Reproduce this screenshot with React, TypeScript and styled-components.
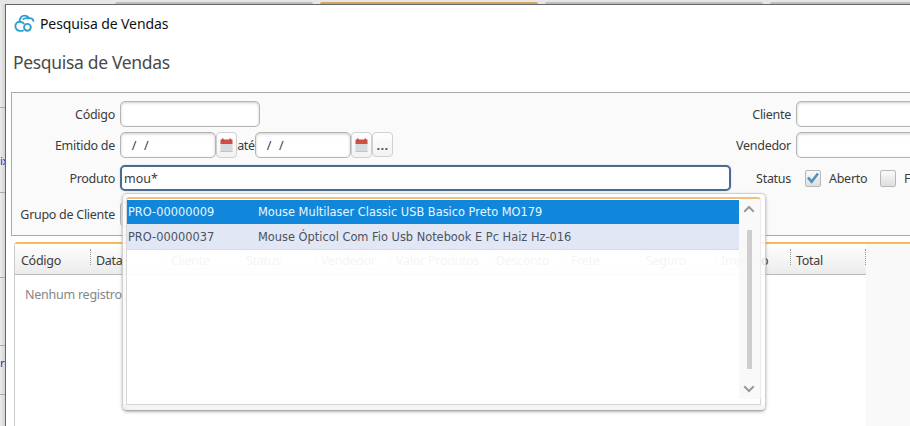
import React from "react";
import styled, { createGlobalStyle } from "styled-components";

const Global = createGlobalStyle`
  * { box-sizing: border-box; }
  html, body { margin: 0; height: 100%; overflow: hidden; }
  body { font-family: "Noto Sans", "Open Sans", sans-serif; font-size: 12.5px; letter-spacing: -0.28px; color: #3c3c3c; background: #e9e9e9; }
`;

const Desktop = styled.div`
  position: relative;
  width: 910px;
  height: 426px;
  overflow: hidden;
  display: grid;
  grid-template-columns: 5px 1fr;
  grid-template-rows: 4px 1fr;
  background: #e6e6e6;
`;

const TabStrip = styled.div`
  grid-column: 1 / 3;
  display: flex;
  align-items: flex-end;
  gap: 7px;
  padding-left: 115px;
`;

const Tab = styled.div<{ $width: number; $active?: boolean }>`
  flex: none;
  width: ${(p) => p.$width}px;
  height: 2px;
  border-radius: 2px 2px 0 0;
  background: ${(p) => (p.$active ? "#cfa666" : "#bdbdbd")};
`;

const Gutter = styled.div`
  overflow: hidden;
  background: linear-gradient(90deg, #ececec, #d4d4d4);
`;

const GutterRow = styled.div<{ $height: number }>`
  display: flex;
  align-items: flex-end;
  height: ${(p) => p.$height}px;
  padding-bottom: 22px;
  border-bottom: 1px dashed #aaa;
  color: #2f2fc4;
  font-size: 11.5px;
  letter-spacing: -0.5px;
  line-height: 18px;
`;

const Window = styled.main`
  min-width: 0;
  border-left: 1px solid #666;
  border-top: 1px solid #666;
  background: #fff;
  overflow: hidden;
`;

const TitleBar = styled.header`
  display: flex;
  align-items: center;
  height: 37px;
  padding-left: 8px;
  gap: 5px;
  color: #111;
  font-size: 14px;
  letter-spacing: -0.1px;
`;

const Heading = styled.h1`
  margin: 0;
  height: 50px;
  padding-left: 7px;
  font-size: 17.5px;
  font-weight: 400;
  line-height: 41px;
  letter-spacing: -0.33px;
  color: #4a4a4a;
`;

const Filters = styled.section`
  display: grid;
  grid-template-columns: 676px 1fr;
  width: 960px;
  height: 144px;
  margin-left: 5px;
  padding-top: 8px;
  border: 1px solid #aaa;
  background: #fafafa;
`;

const Column = styled.div`
  display: flex;
  flex-direction: column;
`;

const FieldRow = styled.div<{ $gap?: number }>`
  display: flex;
  align-items: center;
  height: 26px;
  margin-bottom: ${(p) => p.$gap ?? 5}px;
  white-space: nowrap;
`;

const Label = styled.label`
  flex: none;
  width: 103px;
  margin-right: 5px;
  text-align: right;
`;

const Input = styled.div<{ $width: number; $focus?: boolean }>`
  display: flex;
  align-items: center;
  flex: none;
  width: ${(p) => p.$width}px;
  height: 26px;
  padding-left: ${(p) => (p.$focus ? 2 : 7)}px;
  white-space: pre;
  letter-spacing: ${(p) => (p.$focus ? 0 : 0.4)}px;
  border: ${(p) => (p.$focus ? "2px solid #4c6a90" : "1px solid #b5b5b5")};
  border-radius: 5px;
  background: #fff;
  box-shadow: ${(p) => (p.$focus ? "0 0 2px #bcd0e4" : "inset 0 1px 3px #ccc")};
`;

const SmallButton = styled.span`
  display: flex;
  align-items: center;
  justify-content: center;
  flex: none;
  width: 21px;
  height: 26px;
  border: 1px solid #d0d0d0;
  border-radius: 4px;
  background: linear-gradient(#fff, #f2f2f2);
`;

const Dots = styled(SmallButton)`
  height: 25px;
  margin-bottom: 1px;
  font-weight: 700;
  font-size: 13px;
  letter-spacing: 0.3px;
  color: #555;
`;

const Until = styled.span`
  width: 18px;
  text-align: center;
`;

const Check = styled.span<{ $margin: number }>`
  display: flex;
  align-items: center;
  justify-content: center;
  flex: none;
  width: 16px;
  height: 17px;
  margin-left: ${(p) => p.$margin}px;
  margin-right: 8px;
  border: 1px solid #b8b8b8;
  border-radius: 2px;
  background: linear-gradient(#fafafa, #dedede);
`;

const CheckLabel = styled.span`
  flex: none;
  width: 38px;
`;

const Results = styled.section`
  display: grid;
  grid-template-columns: 851px 1fr;
  grid-template-rows: 30px 1fr;
  height: 190px;
  margin: 6px 0 0 8px;
  border-left: 1px solid #ccc;
  border-top: 2px solid #f7b95b;
  border-radius: 4px 0 0 0;
  background: #fff;
`;

const HeadRow = styled.div`
  display: flex;
  height: 31px;
  padding: 5px 0 0 1px;
  border-bottom: 1px solid #bbb;
  background: linear-gradient(#fff, #ebebeb);
`;

const HeadCell = styled.div<{ $width: number }>`
  flex: none;
  width: ${(p) => p.$width}px;
  height: 16px;
  padding-left: 5px;
  border-right: 1px dotted #999;
  line-height: 23px;
  white-space: nowrap;
`;

const Side = styled.div`
  grid-column: 2;
  grid-row: 1 / 3;
  background: #f9f9f9;
`;

const Empty = styled.div`
  padding: 12px 10px;
  color: #858585;
  line-height: 17px;
  letter-spacing: -0.25px;
`;

const Popup = styled.div`
  position: absolute;
  left: 122px;
  top: 193px;
  width: 644px;
  height: 218px;
  padding: 3px 4px 5px 3px;
  border: 1px solid #d0d0d0;
  border-bottom-color: #aaa;
  border-radius: 5px;
  background: rgba(255, 255, 255, 0.82);
  box-shadow: 0 1px 3px rgba(0, 0, 0, 0.3), inset 0 -5px 0 rgba(0, 0, 0, 0.04), inset 4px 0 0 rgba(0, 0, 0, 0.02);
`;

const PopupBody = styled.div`
  display: grid;
  grid-template-columns: 612px 22px;
  height: 208px;
  border-top: 2px solid #f1c07a;
  border-left: 1px solid #d8d8d8;
  border-right: 1px solid #d4d4d4;
  border-bottom: 1px solid #d4d4d4;
  border-radius: 3px 4px 0 0;
  background: rgba(255, 255, 255, 0.68);
`;

const Option = styled.div<{ $selected?: boolean }>`
  display: grid;
  grid-template-columns: 130px 1fr;
  align-items: center;
  height: ${(p) => (p.$selected ? 24 : 26)}px;
  padding-left: 1px;
  font-family: "DejaVu Sans", sans-serif;
  font-size: 11.4px;
  letter-spacing: 0;
  color: ${(p) => (p.$selected ? "#e8f6ff" : "#4c5360")};
  background: ${(p) => (p.$selected ? "#1187dc" : "#e1e7f4")};
  border-bottom: ${(p) => (p.$selected ? "0" : "1px solid #d5dae3")};
  white-space: nowrap;
`;

const Options = styled.div`
  padding-top: 1px;
`;

const ScrollBar = styled.div`
  display: flex;
  flex-direction: column;
  align-items: center;
  height: 200px;
  padding: 6px 2px 5px 0;
  background: rgba(247, 247, 247, 0.7);
`;

const Thumb = styled.div`
  width: 5px;
  height: 139px;
  margin: 17px 0 16px 1px;
  background: #cecece;
`;

const CloudIcon = () => (
  <svg width="21" height="19" viewBox="0 0 21 19" fill="none" stroke="#2f9fce" strokeWidth="1.9">
    <path d="M9.6 16.2C8.6 16.8 7.4 16.9 6 16.9 3.3 16.9 1.4 14.8 1.4 12.2S3.4 7.8 6 7.8c1.9 0 3.3.9 4.2 2.3" />
    <path d="M5.6 7.8C5.3 4 7.7 1.6 10.5 1.6c2.1 0 3.5.9 4.5 2.6 2.4-.5 4.2.9 4.6 3.4M8.7 5.6c1.9-1.5 4.1-1.8 6.2-1" />
    <circle cx="13.4" cy="13.3" r="3.4" />
  </svg>
);

const CalendarIcon = () => (
  <svg width="13" height="15" viewBox="0 0 13 15">
    <path d="M.5 5h12v9H.5z" fill="#d5dade" />
    <path d="M.5 1.5h12V6H.5z" fill="#d24e43" />
    <path d="M2 .5h1.5V3H2zM9.5.5H11V3H9.5z" fill="#a94840" />
    <path d="M.5 13.5h12" stroke="#bfc4c8" />
  </svg>
);

const TickIcon = () => (
  <svg width="12" height="12" viewBox="0 0 12 12" fill="none" stroke="#4b91c1" strokeWidth="2.6">
    <path d="M1 5.5 4.6 9.7 11 1.5" />
  </svg>
);

const Chevron = ({ down }: { down?: boolean }) => (
  <svg width="12" height="8" viewBox="0 0 12 8" fill="none" stroke="#999" strokeWidth="2">
    <path d={down ? "M1.2 1.3 6 6 10.8 1.3" : "M1.2 6.7 6 2 10.8 6.7"} />
  </svg>
);

const columns: [string, number][] = [
  ["Código", 75], ["Data", 75], ["Cliente", 75], ["Status", 75], ["Vendedor", 75], ["Valor Produtos", 100],
  ["Desconto", 75], ["Frete", 75], ["Seguro", 75], ["Imposto", 75], ["Total", 75],
];

export default function App() {
  return (
    <>
      <Global />
      <Desktop>
        <TabStrip>
          <Tab $width={198} />
          <Tab $width={218} $active />
          <Tab $width={218} />
          <Tab $width={218} />
        </TabStrip>
        <Gutter>
          <GutterRow $height={104} />
          <GutterRow $height={85}>ix</GutterRow>
          <GutterRow $height={85} />
          <GutterRow $height={68} />
          <GutterRow $height={49}>r</GutterRow>
        </Gutter>
        <Window>
          <TitleBar><CloudIcon />Pesquisa de Vendas</TitleBar>
          <Heading>Pesquisa de Vendas</Heading>
          <Filters>
            <Column>
              <FieldRow><Label>Código</Label><Input $width={140} /></FieldRow>
              <FieldRow $gap={7}>
                <Label>Emitido de</Label>
                <Input $width={96}>{" /  /"}</Input>
                <SmallButton><CalendarIcon /></SmallButton>
                <Until>até</Until>
                <Input $width={96}>{" /  /"}</Input>
                <SmallButton><CalendarIcon /></SmallButton>
                <Dots>...</Dots>
              </FieldRow>
              <FieldRow $gap={10}><Label>Produto</Label><Input $width={611} $focus>mou*</Input></FieldRow>
              <FieldRow><Label>Grupo de Cliente</Label><Input $width={300} /></FieldRow>
            </Column>
            <Column>
              <FieldRow><Label>Cliente</Label><Input $width={180} /></FieldRow>
              <FieldRow $gap={7}><Label>Vendedor</Label><Input $width={180} /></FieldRow>
              <FieldRow>
                <Label>Status</Label>
                <Check $margin={9}><TickIcon /></Check><CheckLabel>Aberto</CheckLabel>
                <Check $margin={13} /><CheckLabel>F</CheckLabel>
              </FieldRow>
            </Column>
          </Filters>
          <Results>
            <HeadRow>
              {columns.map(([name, width]) => <HeadCell key={name} $width={width}>{name}</HeadCell>)}
            </HeadRow>
            <Side />
            <Empty>Nenhum registro</Empty>
          </Results>
        </Window>
        <Popup>
          <PopupBody>
            <Options>
              <Option $selected><span>PRO-00000009</span><span>Mouse Multilaser Classic USB Basico Preto MO179</span></Option>
              <Option><span>PRO-00000037</span><span>Mouse Ópticol Com Fio Usb Notebook E Pc Haiz Hz-016</span></Option>
            </Options>
            <ScrollBar><Chevron /><Thumb /><Chevron down /></ScrollBar>
          </PopupBody>
        </Popup>
      </Desktop>
    </>
  );
}
